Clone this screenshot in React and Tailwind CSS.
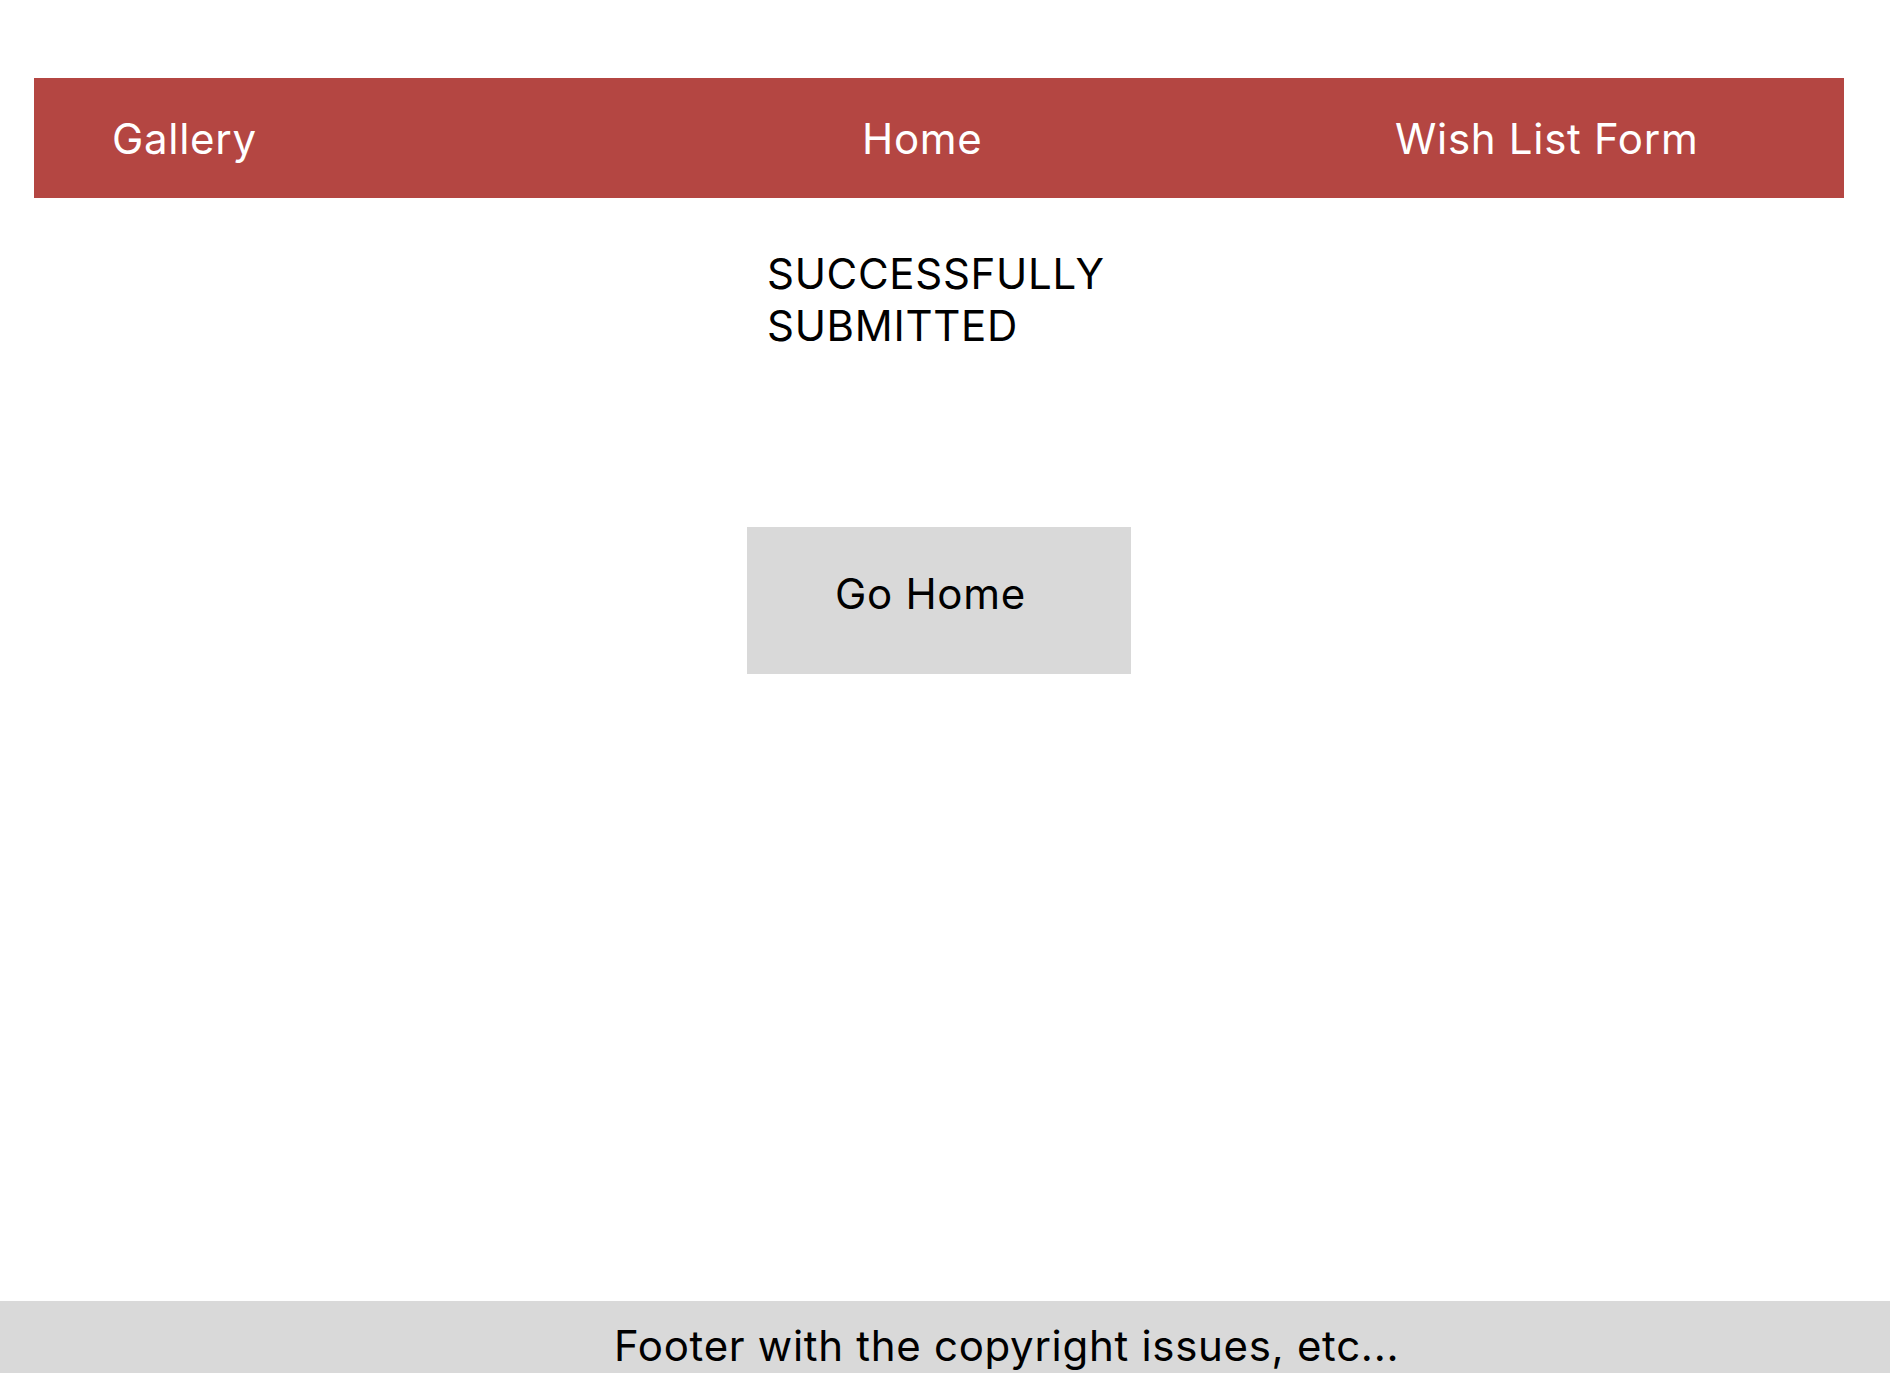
export default function App() {
  return (
    <div className="min-h-screen flex flex-col bg-white text-black font-['Inter','Liberation_Sans',sans-serif] tracking-[0.7px]">
      <div className="pt-[78px] pl-[34px] w-[1844px]">
        <nav className="h-[120px] bg-[#b44642] text-white text-[42px] leading-[52px] grid grid-cols-[750px_533px_1fr] items-center pl-[78px] pt-[2px]">
          <a href="#gallery">Gallery</a>
          <a href="#home">Home</a>
          <a href="#wishlist">Wish List Form</a>
        </nav>
        <main className="flex flex-col items-center">
          <p className="w-[384px] pl-[20px] mt-[50px] text-[42px] leading-[52px]">
            SUCCESSFULLY SUBMITTED
          </p>
          <button
            type="button"
            className="w-[384px] h-[147px] mt-[175px] bg-[#d9d9d9] text-left pl-[88px] pt-[41px] self-center flex items-start text-[42px] leading-[52px] tracking-[0.7px]"
          >
            Go Home
          </button>
        </main>
      </div>
      <footer className="mt-auto h-[72px] bg-[#d9d9d9] pl-[614px] pt-[19px] text-[42px] leading-[52px]">
        Footer with the copyright issues, etc...
      </footer>
    </div>
  );
}
